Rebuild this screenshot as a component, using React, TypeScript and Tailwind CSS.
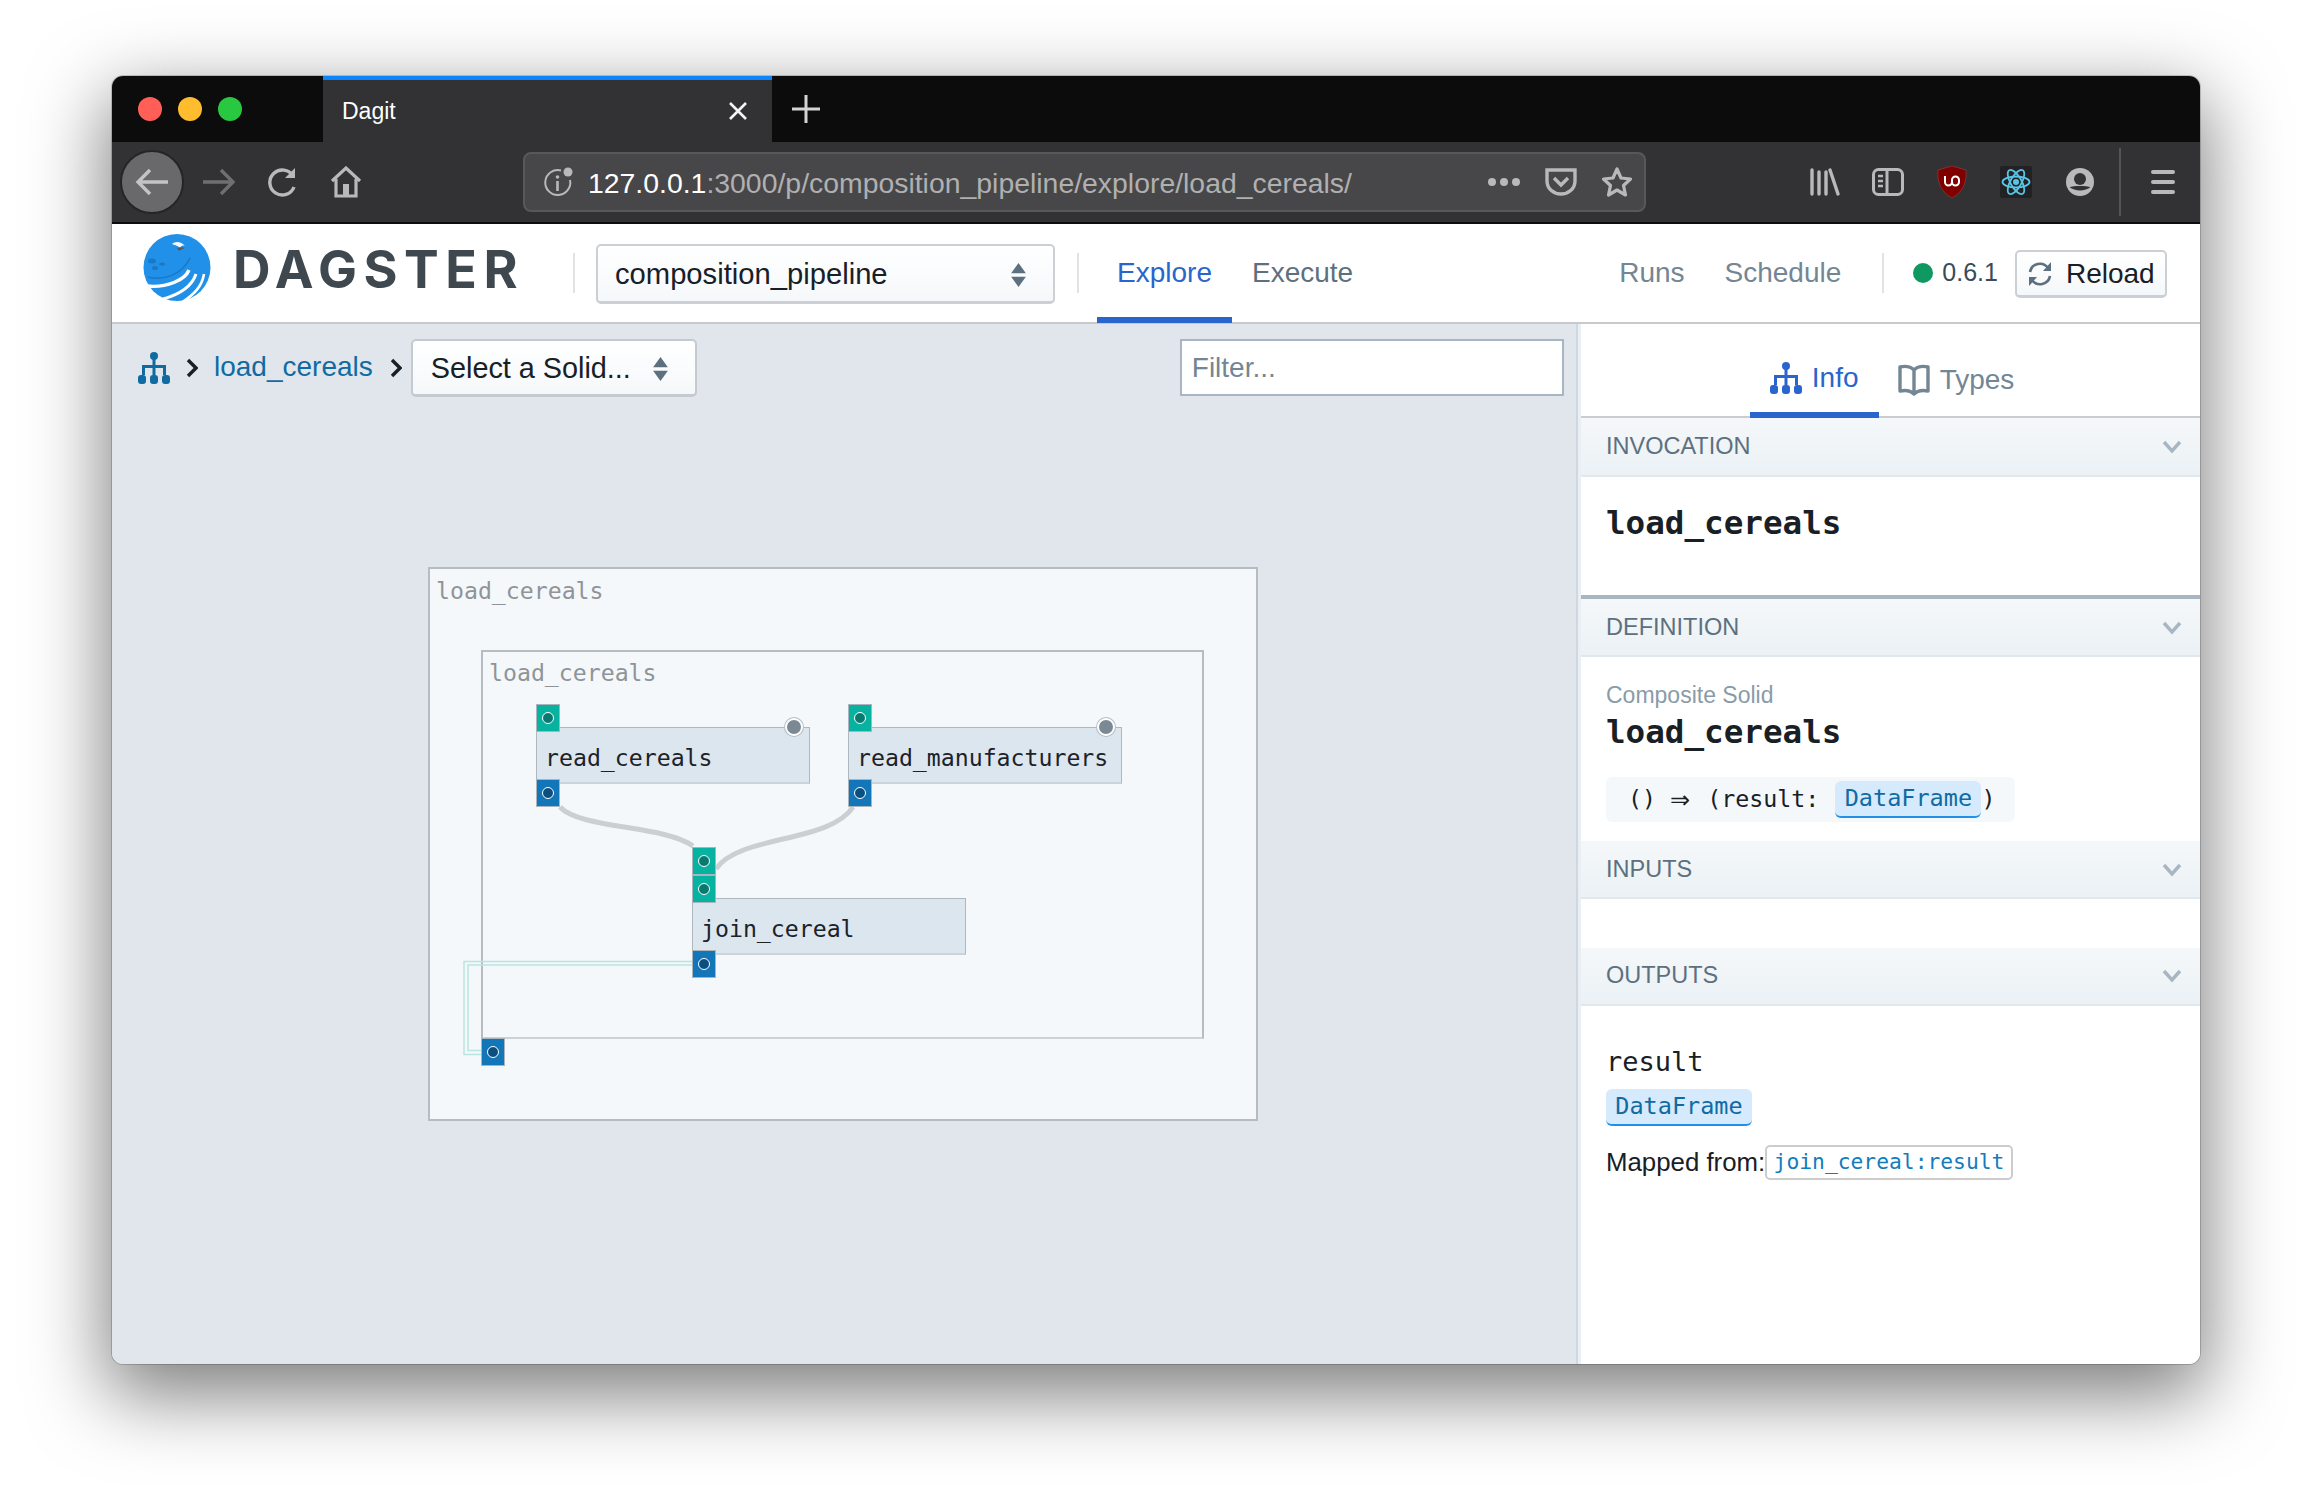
import React from 'react'

const mono = "font-['DejaVu_Sans_Mono',monospace]"

const Hierarchy = ({ className }: { className: string }) => (
  <svg className={className} viewBox="0 0 32 32" fill="currentColor">
    <circle cx="16" cy="4" r="4" />
    <rect x="14.5" y="7" width="3" height="8" />
    <rect x="4" y="13" width="24" height="3" />
    <rect x="4" y="13" width="3" height="10" />
    <rect x="14.5" y="13" width="3" height="10" />
    <rect x="25" y="13" width="3" height="10" />
    <rect x="0" y="23" width="8" height="9" rx="3" />
    <rect x="12" y="23" width="8" height="9" rx="3" />
    <rect x="24" y="23" width="8" height="9" rx="3" />
  </svg>
)

const Crumb = () => (
  <svg className="w-[12px] h-[20px] text-[#182026]" viewBox="0 0 12 20" fill="none" stroke="currentColor" strokeWidth="3.4">
    <path d="M2 2l8 8-8 8" />
  </svg>
)

const Carets = ({ className }: { className: string }) => (
  <svg className={className} viewBox="0 0 16 26" fill="#5c7080">
    <path d="M8 0l8 11H0zM0 15h16L8 26z" />
  </svg>
)

const Logo = () => (
  <svg className="w-[68px] h-[68px] shrink-0 mb-[10px]" viewBox="0 0 68 68">
    <circle cx="34" cy="33.500" r="33.500" fill="#2090e8" />
    <path d="M5 43C20 47 39 41 47 24" fill="none" stroke="#1a78c4" strokeWidth="1.500" />
    <path d="M46 36C42 46 24 54 4 52" fill="none" stroke="#fff" strokeWidth="3.400" />
    <path d="M53 40C49 52 38 60 20 65" fill="none" stroke="#fff" strokeWidth="3" />
    <path d="M61 40C59 52 52 60 38 69" fill="none" stroke="#fff" strokeWidth="2.600" />
    <path d="M29 10c3-3 9-3 13 2-3-1-4 0-5 2-3-3-6-3-8-4z" fill="#f4f8fb" />
    <path d="M34 14c2-1 5-1 8 0-3 1-5 2-6 3z" fill="#4a5a66" />
    <ellipse cx="9" cy="27" rx="4" ry="2.500" fill="#1a78c4" />
    <ellipse cx="12" cy="34" rx="3" ry="2" fill="#1a78c4" />
    <ellipse cx="19" cy="30" rx="3" ry="1.600" fill="#1a78c4" />
  </svg>
)

const SectionHeader = ({ title, className }: { title: string; className: string }) => (
  <div className={`flex items-center justify-between pl-[25px] pr-[18px] bg-gradient-to-b from-[#f5f8fa] to-[#ebf1f5] border-b-2 border-[#e1e8ed] text-[23.5px] text-[#5c7080] shrink-0 ${className}`}>
    <span>{title}</span>
    <svg className="w-[20px] h-[14px] text-[#a7b6c2]" viewBox="0 0 20 14" fill="none" stroke="currentColor" strokeWidth="3.4">
      <path d="M2 2l8 9 8-9" />
    </svg>
  </div>
)

const TypeTag = ({ className }: { className: string }) => (
  <span className={`${mono} inline-flex items-center justify-center w-[146px] h-[37px] bg-[#d5eafc] border-b-2 border-[#2090e8] rounded-[6px] text-[23.5px] text-[#106ba3] ${className}`}>
    DataFrame
  </span>
)

const Port = ({ className, kind }: { className: string; kind: 'in' | 'out' }) => (
  <div
    className={`absolute w-[24px] h-[28px] flex items-center justify-center border border-[#a9b4bc] ${
      kind === 'in' ? 'bg-[#07b3a0]' : 'bg-[#1276b8]'
    } ${className}`}
  >
    <div className={`w-[12px] h-[12px] rounded-full border-[1.5px] border-white ${kind === 'in' ? 'bg-[#087a70]' : 'bg-[#0b4f80]'}`} />
  </div>
)

const Solid = ({ name, className }: { name: string; className: string }) => (
  <div className={`absolute w-[274px] h-[57px] bg-[#dce6ef] border border-[#b0b8bf] border-b-2 border-b-[#ccd3d9] flex items-end pb-[6px] pl-[8px] text-[23.2px] text-[#1c2228] ${mono} ${className}`}>
    {name}
  </div>
)

const ConfigDot = ({ className }: { className: string }) => (
  <div className={`absolute w-[18px] h-[18px] rounded-full bg-[#7b8994] border-2 border-white ring-1 ring-[#b4bcc3] ${className}`} />
)

export default function App() {
  return (
    <div className="w-[2312px] h-[1512px] bg-white pt-[76px] pl-[112px] overflow-hidden font-['Liberation_Sans',Arial,sans-serif]">
      <div className="w-[2088px] h-[1288px] rounded-[11px] overflow-hidden flex flex-col shadow-[0_26px_76px_6px_rgba(0,0,0,0.5),0_0_0_1px_rgba(0,0,0,0.18)] bg-[#e0e6ec]">
        {/* tab strip */}
        <div className="h-[66px] bg-[#0c0c0c] flex shrink-0">
          <div className="flex items-center gap-[16px] pl-[26px] w-[211px]">
            <div className="w-[24px] h-[24px] rounded-full bg-[#ff5f57]" />
            <div className="w-[24px] h-[24px] rounded-full bg-[#febc2e]" />
            <div className="w-[24px] h-[24px] rounded-full bg-[#28c840]" />
          </div>
          <div className="w-[449px] bg-[#323234] border-t-4 border-[#0a84ff] flex items-center pl-[19px] pr-[24px] justify-between text-[23px] text-white">
            <span>Dagit</span>
            <svg className="w-[20px] h-[20px]" viewBox="0 0 20 20" stroke="#f4f4f4" strokeWidth="2.6">
              <path d="M2 2l16 16M18 2L2 18" />
            </svg>
          </div>
          <div className="flex items-center pl-[20px]">
            <svg className="w-[28px] h-[28px]" viewBox="0 0 28 28" stroke="#d4d4d4" strokeWidth="3">
              <path d="M14 0v28M0 14h28" />
            </svg>
          </div>
        </div>

        {/* toolbar */}
        <div className="h-[82px] bg-[#323234] border-b-2 border-[#0c0c0c] flex items-center shrink-0 text-[#b9b9ba]">
          <div className="ml-[8px] w-[64px] h-[64px] rounded-full bg-[#69696b] border-2 border-[#252527] flex items-center justify-center">
            <svg className="w-[34px] h-[28px]" viewBox="0 0 34 28" fill="none" stroke="#c4c4c5" strokeWidth="3.4">
              <path d="M33 14H3M15 2L3 14l12 12" />
            </svg>
          </div>
          <svg className="ml-[18px] w-[34px] h-[28px]" viewBox="0 0 34 28" fill="none" stroke="#6f6f71" strokeWidth="3.4">
            <path d="M1 14h30M19 2l12 12-12 12" />
          </svg>
          <svg className="ml-[32px] w-[30px] h-[30px]" viewBox="0 0 30 30" fill="none" stroke="currentColor" strokeWidth="3.4">
            <path d="M26 20a12.5 12.5 0 1 1-1-11" />
            <path d="M27 1v10H17" fill="currentColor" stroke="none" />
          </svg>
          <svg className="ml-[32px] w-[32px] h-[32px]" viewBox="0 0 32 32" fill="none" stroke="currentColor" strokeWidth="3.2">
            <path d="M2 15L16 2l14 13" />
            <path d="M6 13v17h20V13" />
            <rect x="13" y="18" width="6" height="12" fill="currentColor" stroke="none" />
          </svg>

          <div className="ml-[161px] w-[1123px] h-[60px] rounded-[8px] bg-[#474749] border-2 border-[#58585a] flex items-center shrink-0">
            <svg className="ml-[18px] w-[30px] h-[30px]" viewBox="0 0 30 30" fill="none" stroke="currentColor" strokeWidth="2">
              <path d="M18 3.5A12.5 12.5 0 1 0 27 13" />
              <circle cx="25" cy="5" r="4.5" fill="currentColor" stroke="none" />
              <circle cx="14.5" cy="10" r="1.8" fill="currentColor" stroke="none" />
              <path d="M14.5 14v10" strokeWidth="2.6" />
            </svg>
            <div className="ml-[15px] pt-[2px] text-[28.4px] leading-none whitespace-nowrap w-[881px]">
              <span className="text-white">127.0.0.1</span>
              <span className="text-[#b0b0b1]">:3000/p/composition_pipeline/explore/load_cereals/</span>
            </div>
            <div className="ml-[19px] flex gap-[4px]">
              <div className="w-[8px] h-[8px] rounded-full bg-[#b9b9ba]" />
              <div className="w-[8px] h-[8px] rounded-full bg-[#b9b9ba]" />
              <div className="w-[8px] h-[8px] rounded-full bg-[#b9b9ba]" />
            </div>
            <svg className="ml-[25px] w-[32px] h-[28px]" viewBox="0 0 32 28" fill="none" stroke="currentColor" strokeWidth="3.4">
              <path d="M2 2h28v11c0 8-7 13-14 13S2 21 2 13z" />
              <path d="M9 10l7 7 7-7" />
            </svg>
            <svg className="ml-[24px] w-[32px] h-[32px]" viewBox="0 0 32 32" fill="none" stroke="currentColor" strokeWidth="3.2">
              <path d="M16 3l4 9 9.500 1-7 6.500 2 9.500-8.500-5-8.500 5 2-9.500-7-6.500L12 12z" strokeLinejoin="round" />
            </svg>
          </div>

          {/* library, sidebar, ublock, react, account, menu */}
          <svg className="ml-[164px] w-[30px] h-[28px]" viewBox="0 0 30 28" fill="none" stroke="currentColor" strokeWidth="3.4" strokeLinecap="round">
            <path d="M2 2v24M9 4v22M16 4v22M20 2l8 24" />
          </svg>
          <svg className="ml-[32px] w-[32px] h-[28px]" viewBox="0 0 32 28" fill="none" stroke="currentColor" strokeWidth="3">
            <rect x="1.500" y="1.500" width="29" height="25" rx="5" />
            <path d="M15 2v24" />
            <path d="M6 8h5M6 13h5M6 18h5" strokeWidth="2.4" />
          </svg>
          <svg className="ml-[33px] w-[30px] h-[32px]" viewBox="0 0 30 32">
            <path d="M15 0l14 4c1 12-3 22-14 28C4 26 0 16 1 4z" fill="#800000" stroke="#a04040" strokeWidth="0.6" />
            <path d="M8 10v6a3.500 3.500 0 0 0 7 0v-2a3.500 3.500 0 0 1 7 0v2a3.500 3.500 0 0 1-7 0" fill="none" stroke="#fff" strokeWidth="2" />
          </svg>
          <div className="ml-[33px] w-[32px] h-[32px] bg-[#222224] rounded-[2px] flex items-center justify-center">
            <svg className="w-[30px] h-[30px]" viewBox="-15 -15 30 30" fill="none" stroke="#58c4e6" strokeWidth="1.8">
              <ellipse rx="13.500" ry="5.500" />
              <ellipse rx="13.500" ry="5.500" transform="rotate(60)" />
              <ellipse rx="13.500" ry="5.500" transform="rotate(120)" />
              <circle r="3" fill="#58c4e6" stroke="none" />
            </svg>
          </div>
          <svg className="ml-[34px] w-[28px] h-[28px]" viewBox="0 0 28 28">
            <circle cx="14" cy="14" r="14" fill="currentColor" />
            <circle cx="14" cy="11" r="6" fill="#323234" />
            <path d="M3.500 19c5 4.500 16 4.500 21 0-4-1.500-17-1.500-21 0z" fill="#323234" />
          </svg>
          <div className="ml-[25px] w-[2px] h-[68px] bg-[#555557]" />
          <div className="ml-[30px] w-[24px] flex flex-col gap-[6px]">
            <div className="h-[4px] rounded-full bg-[#b9b9ba]" />
            <div className="h-[4px] rounded-full bg-[#b9b9ba]" />
            <div className="h-[4px] rounded-full bg-[#b9b9ba]" />
          </div>
        </div>

        {/* dagit header */}
        <div className="h-[100px] bg-white border-b-2 border-[#c6cacd] flex items-center shrink-0 relative pl-[31px]">
          <Logo />
          <div className="ml-[22px] mb-[6px] w-[292px] text-[52px] font-bold leading-none tracking-[6.5px] text-[#3f484f] whitespace-nowrap font-['Inter',sans-serif]">
            DAGSTER
          </div>
          <div className="ml-[48px] w-[2px] h-[40px] bg-[#dfe3e6]" />
          <div className="ml-[21px] mt-[2px] w-[459px] h-[60px] rounded-[5px] border-2 border-[#ccd0d4] border-b-[3px] bg-gradient-to-b from-white to-[#f5f8fa] flex items-center justify-between pl-[17px] pr-[26px] pt-[2px] text-[29.2px] text-[#182026]">
            <span>composition_pipeline</span>
            <Carets className="w-[17px] h-[24px]" />
          </div>
          <div className="ml-[22px] w-[2px] h-[40px] bg-[#dfe3e6]" />
          <div className="ml-[18px] w-[135px] h-[100px] border-b-[6px] border-[#2965cc] flex items-center justify-center text-[28px] text-[#2965cc] pt-[6px]">
            Explore
          </div>
          <div className="ml-[20px] text-[28px] text-[#5c7080]">Execute</div>
          <div className="ml-[266px] text-[28px] text-[#738694]">Runs</div>
          <div className="ml-[40px] text-[28px] text-[#738694]">Schedule</div>
          <div className="ml-[41px] w-[2px] h-[40px] bg-[#dfe3e6]" />
          <div className="ml-[29px] w-[20px] h-[20px] rounded-full bg-[#0f9960]" />
          <div className="ml-[9px] text-[25px] text-[#394b59]">0.6.1</div>
          <div className="ml-[17px] mt-[2px] w-[152px] h-[48px] rounded-[5px] border-2 border-[#ccd0d4] border-b-[3px] bg-gradient-to-b from-white to-[#f5f8fa] flex items-center pl-[10px] pt-[1px] text-[28px] text-[#182026]">
            <svg className="w-[26px] h-[26px] text-[#5c7080]" viewBox="0 0 26 26" fill="none" stroke="currentColor" strokeWidth="2.6">
              <path d="M3 11a10 10 0 0 1 18-4" />
              <path d="M23 15a10 10 0 0 1-18 4" />
              <path d="M24 1v9h-8z" fill="currentColor" stroke="none" />
              <path d="M2 25v-9h8z" fill="currentColor" stroke="none" />
            </svg>
            <span className="ml-[13px]">Reload</span>
          </div>
        </div>

        {/* body */}
        <div className="flex-1 flex min-h-0">
          <div className="relative w-[1464px] shrink-0 bg-[#e0e6ec]">
            <div className="flex items-center h-[58px] mt-[15px] pl-[26px]">
              <Hierarchy className="w-[32px] h-[32px] text-[#106ba3]" />
              <div className="ml-[16px]"><Crumb /></div>
              <span className="ml-[16px] text-[28px] text-[#106ba3] pb-[3px]">load_cereals</span>
              <div className="ml-[17px]"><Crumb /></div>
              <div className="ml-[9px] w-[286px] h-[58px] rounded-[5px] border-2 border-[#c4cacf] border-b-[3px] bg-gradient-to-b from-white to-[#f5f8fa] flex items-center pl-[18px] pt-[2px] text-[28.8px] text-[#182026]">
                <span>Select a Solid...</span>
                <Carets className="ml-[21px] w-[17px] h-[24px]" />
              </div>
              <div className="ml-[483px] -mt-[2px] w-[384px] h-[57px] bg-white border-2 border-[#a7b6c2] flex items-center pl-[10px] pt-[2px] text-[28px] text-[#738694]">
                Filter...
              </div>
            </div>

            {/* graph */}
            <div className="absolute left-[316px] top-[243px] w-[830px] h-[554px] bg-[#f5f8fb] border-2 border-[#b6bcc2]">
              <div className={`absolute left-[6px] top-[5px] text-[23.2px] text-[#8f9498] ${mono}`}>load_cereals</div>
              <div className="absolute left-[51px] top-[81px] w-[723px] h-[389px] border-2 border-[#b6bcc2] border-b-[#ccd1d6]">
                <div className={`absolute left-[6px] top-[4px] text-[23.2px] text-[#8f9498] ${mono}`}>load_cereals</div>
              </div>
              <svg className="absolute left-[-2px] top-[-2px] w-[830px] h-[553px] overflow-visible" viewBox="0 0 830 553" fill="none">
                <path d="M132 240C152 262 236 258 265 279" stroke="#cbcfd2" strokeWidth="5" />
                <path d="M425 240C402 276 310 268 288 302" stroke="#cbcfd2" strokeWidth="5" />
                <path d="M265 394.500H36V487.500H53" stroke="#b9e4e0" strokeWidth="1.500" />
                <path d="M265 398H40V483.500H53" stroke="#b9e4e0" strokeWidth="1.500" />
              </svg>
              <div className="absolute left-[-2px] top-[-2px]">
                <Solid name="read_cereals" className="left-[108px] top-[160px]" />
                <Port kind="in" className="left-[108px] top-[137px]" />
                <Port kind="out" className="left-[108px] top-[212px]" />
                <ConfigDot className="left-[357px] top-[151px]" />

                <Solid name="read_manufacturers" className="left-[420px] top-[160px]" />
                <Port kind="in" className="left-[420px] top-[137px]" />
                <Port kind="out" className="left-[420px] top-[212px]" />
                <ConfigDot className="left-[669px] top-[151px]" />

                <Solid name="join_cereal" className="left-[264px] top-[331px]" />
                <Port kind="in" className="left-[264px] top-[280px]" />
                <Port kind="in" className="left-[264px] top-[308px]" />
                <Port kind="out" className="left-[264px] top-[383px]" />

                <Port kind="out" className="left-[53px] top-[471px]" />
              </div>
            </div>
          </div>

          <div className="w-[5px] bg-[#e9eff4] border-l-2 border-[#cfd8df] shrink-0" />

          {/* sidebar */}
          <div className="flex-1 bg-white flex flex-col min-w-0">
            <div className="h-[94px] border-b-2 border-[#cccccc] flex justify-center shrink-0">
              <div className="w-[129px] ml-[-17px] h-[94px] border-b-[6px] border-[#2965cc] mb-[-2px] flex items-center justify-center gap-[10px] text-[28px] text-[#2965cc] pt-[20px]">
                <Hierarchy className="w-[32px] h-[32px]" />
                <span>Info</span>
              </div>
              <div className="ml-[19px] flex items-center gap-[10px] text-[28px] text-[#738694] pt-[20px]">
                <svg className="w-[32px] h-[32px]" viewBox="0 0 32 32" fill="none" stroke="currentColor" strokeWidth="3.4">
                  <path d="M16 6C12 2 6 2 2 3v24c5-1 10-1 14 3 4-4 9-4 14-3V3c-4-1-10-1-14 3zM16 6v24" strokeLinejoin="round" />
                </svg>
                <span>Types</span>
              </div>
            </div>

            <SectionHeader title="INVOCATION" className="h-[59px]" />
            <div className={`h-[118px] pl-[25px] pt-[26px] text-[32.600px] font-bold leading-[40px] text-[#182026] shrink-0 ${mono}`}>load_cereals</div>
            <div className="h-[4px] bg-[#a7b6c2] shrink-0" />

            <SectionHeader title="DEFINITION" className="h-[58px] pt-[1px]" />
            <div className="h-[184px] pl-[25px] pt-[25px] shrink-0">
              <div className="text-[23px] leading-[26px] text-[#8a9ba8]">Composite Solid</div>
              <div className={`mt-[4px] text-[32.600px] font-bold leading-[40px] text-[#182026] ${mono}`}>load_cereals</div>
              <div className={`mt-[25px] w-[409px] h-[45px] rounded-[6px] bg-[#f5f8fa] flex items-center pl-[22px] text-[23.3px] text-[#182026] ${mono}`}>
                <span>()</span>
                <span className="ml-[14px] text-[24px] font-['DejaVu_Sans',sans-serif]">⇒</span>
                <span className="ml-[17px]">(result:</span>
                <TypeTag className="ml-[16px] shrink-0" />
                <span>)</span>
              </div>
            </div>

            <SectionHeader title="INPUTS" className="h-[58px] pt-[1px]" />
            <div className="h-[49px] shrink-0" />
            <SectionHeader title="OUTPUTS" className="h-[58px]" />
            <div className="pl-[25px] pt-[40px]">
              <div className={`text-[27px] leading-[32px] text-[#182026] ${mono}`}>result</div>
              <TypeTag className="mt-[11px]" />
              <div className="mt-[17px] flex items-center text-[25.8px] text-[#182026]">
                <span className="w-[159px] shrink-0 whitespace-nowrap">Mapped from:</span>
                <span className={`w-[248px] h-[35px] rounded-[5px] border-2 border-[#cccccc] flex items-center justify-center text-[21.3px] text-[#137cbd] ${mono}`}>
                  join_cereal:result
                </span>
              </div>
            </div>
          </div>
        </div>
      </div>
    </div>
  )
}
